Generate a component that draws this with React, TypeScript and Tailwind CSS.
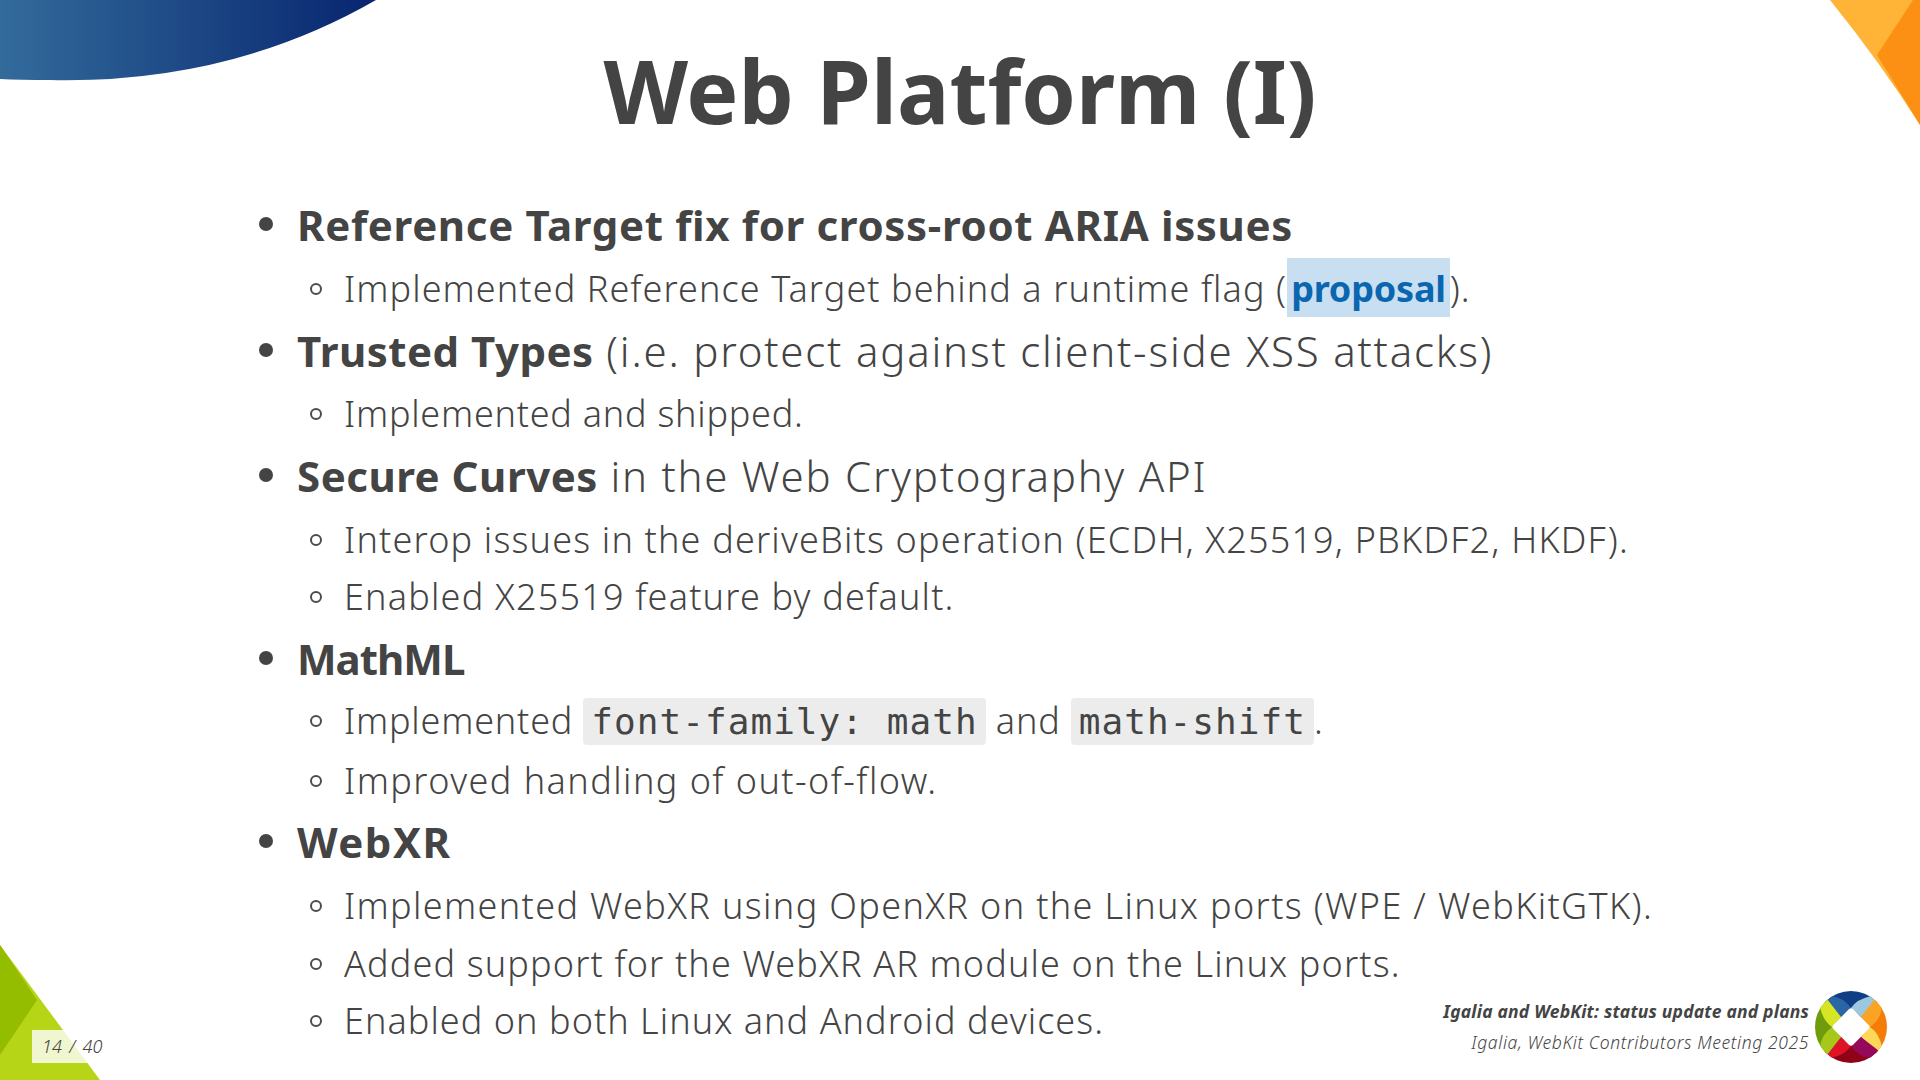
const Bullet = () => (
  <span className="mr-[24px] ml-[-38px] h-[14px] w-[14px] shrink-0 rounded-full bg-[#444444]" />
);

const Ring = () => (
  <span className="mr-[22px] ml-[-34px] h-[12px] w-[12px] shrink-0 rounded-full border-2 border-[#4d4d4d]" />
);

const Main = ({ children, className = "" }: { children: React.ReactNode; className?: string }) => (
  <li className={`flex h-[56px] items-center whitespace-pre pl-[297px] text-[42px] ${className}`}>
    <Bullet />
    <span>{children}</span>
  </li>
);

const Sub = ({ children, className = "" }: { children: React.ReactNode; className?: string }) => (
  <li className={`flex h-[56px] items-center whitespace-pre pl-[344px] text-[36px] font-light ${className}`}>
    <Ring />
    <span>{children}</span>
  </li>
);

const Code = ({ children }: { children: React.ReactNode }) => (
  <code className="rounded-[4px] bg-[#ececec] px-[8px] py-[3px] font-['DejaVu_Sans_Mono',monospace] text-[36px] font-normal tracking-[1.05px]">
    {children}
  </code>
);

const Logo = () => (
  <svg viewBox="0 0 72 72" className="h-[72px] w-[72px] shrink-0">
    <defs>
      <clipPath id="disc">
        <circle cx="36" cy="36" r="36" />
      </clipPath>
    </defs>
    <g clipPath="url(#disc)">
      {/* top */}
      <path d="M0 0H72L36 36Z" fill="#103e85" />
      <path d="M36 17Q28 6 16 5L8 12L26 26Z" fill="#2a66a6" />
      <path d="M36 17Q42 8 56 5L64 12L46 26Z" fill="#9cc7de" />
      {/* right */}
      <path d="M72 0V72L36 36Z" fill="#f47c08" />
      <path d="M55 36Q66 28 67 16L60 8L46 26Z" fill="#fba423" />
      <path d="M55 36Q64 42 67 56L60 64L46 46Z" fill="#fcd75a" />
      {/* bottom */}
      <path d="M0 72H72L36 36Z" fill="#8e0416" />
      <path d="M36 55Q30 64 16 67L8 60L26 46Z" fill="#de1426" />
      <path d="M36 55Q44 66 56 67L64 60L46 46Z" fill="#96085c" />
      {/* left */}
      <path d="M0 0V72L36 36Z" fill="#6f9b0c" />
      <path d="M17 36Q8 30 5 16L12 8L26 26Z" fill="#d7e525" />
      <path d="M17 36Q6 44 5 56L12 64L26 46Z" fill="#a6c81b" />
    </g>
    <rect x="22" y="22" width="28" height="28" rx="3" transform="rotate(45 36 36)" fill="#ffffff" />
  </svg>
);

export default function App() {
  return (
    <div className="relative h-[1080px] w-[1920px] overflow-hidden bg-white font-['Noto_Sans',sans-serif] text-[#444444]">
      {/* corner decorations */}
      <svg className="absolute top-0 left-0" width="400" height="90">
        <defs>
          <linearGradient id="navy" x1="0" x2="1" y1="0" y2="0">
            <stop offset="0" stopColor="#336b9b" />
            <stop offset="1" stopColor="#07256f" />
          </linearGradient>
        </defs>
        <path d="M0 0H376Q230 84 50 80Q20 80 0 79Z" fill="url(#navy)" />
      </svg>
      <svg className="absolute top-0 right-0" width="100" height="130" viewBox="1820 0 100 130">
        <path d="M1830 0H1920V125Q1880 62 1830 0Z" fill="#ffb337" />
        <path d="M1913 0H1920V125Q1900 92 1877 55Z" fill="#fb9015" />
      </svg>
      <svg className="absolute bottom-0 left-0" width="110" height="140" viewBox="0 940 110 140">
        <path d="M0 945L100 1080H0Z" fill="#b5d516" />
        <path d="M0 945L37 1000L0 1055Z" fill="#95bd00" />
      </svg>

      <h1 className="flex h-[181px] items-center justify-center text-[87.5px] leading-none font-bold">
        Web Platform (I)
      </h1>

      <ul className="flex flex-col">
        <Main className="mt-[15px] font-bold tracking-[0.65px]">Reference Target fix for cross-root ARIA issues</Main>
        <Sub className="mt-[9px] tracking-[1.08px]">
          Implemented Reference Target behind a runtime flag (
          <a className="bg-[#c8dff1] pt-[6px] pr-[4px] pb-[4px] pl-[4px] font-bold tracking-[-0.2px] text-[#0b66b0]">proposal</a>
          ).
        </Sub>
        <Main className="mt-[5px] font-light tracking-[1.8px]">
          <b className="font-bold tracking-[0.5px]">Trusted Types</b> (i.e. protect against client-side XSS attacks)
        </Main>
        <Sub className="mt-[8px] tracking-[0.75px]">Implemented and shipped.</Sub>
        <Main className="mt-[5px] font-light tracking-[1.75px]">
          <b className="font-bold tracking-[0.5px]">Secure Curves</b> in the Web Cryptography API
        </Main>
        <Sub className="mt-[9px] tracking-[1.18px]">Interop issues in the deriveBits operation (ECDH, X25519, PBKDF2, HKDF).</Sub>
        <Sub className="mt-[1px] tracking-[1.2px]">Enabled X25519 feature by default.</Sub>
        <Main className="mt-[5px] font-bold tracking-[-1px]">MathML</Main>
        <Sub className="mt-[7px] tracking-[0.8px]">
          Implemented <Code>font-family: math</Code> and <Code>math-shift</Code>.
        </Sub>
        <Sub className="mt-[4px] tracking-[1.45px]">Improved handling of out-of-flow.</Sub>
        <Main className="mt-[4px] font-bold tracking-[1.5px]">WebXR</Main>
        <Sub className="mt-[9px] tracking-[1.36px]">Implemented WebXR using OpenXR on the Linux ports (WPE / WebKitGTK).</Sub>
        <Sub className="mt-[2px] tracking-[1.15px]">Added support for the WebXR AR module on the Linux ports.</Sub>
        <Sub className="mt-[1px] tracking-[1.05px]">Enabled on both Linux and Android devices.</Sub>
      </ul>

      <div className="absolute bottom-[17px] left-[32px] flex h-[33px] w-[73px] items-center bg-white/80 pl-[10px] text-[18px] font-light tracking-[0.2px] italic">
        14 <span className="mx-[7px]">/</span> 40
      </div>

      <div className="absolute right-[33px] bottom-[17px] flex items-center gap-[6px]">
        <div className="flex flex-col items-end">
          <span className="text-[17.5px] leading-[31px] font-bold tracking-[0.2px] italic">Igalia and WebKit: status update and plans</span>
          <span className="text-[17.5px] leading-[31px] font-light tracking-[0.6px] italic">Igalia, WebKit Contributors Meeting 2025</span>
        </div>
        <Logo />
      </div>
    </div>
  );
}
